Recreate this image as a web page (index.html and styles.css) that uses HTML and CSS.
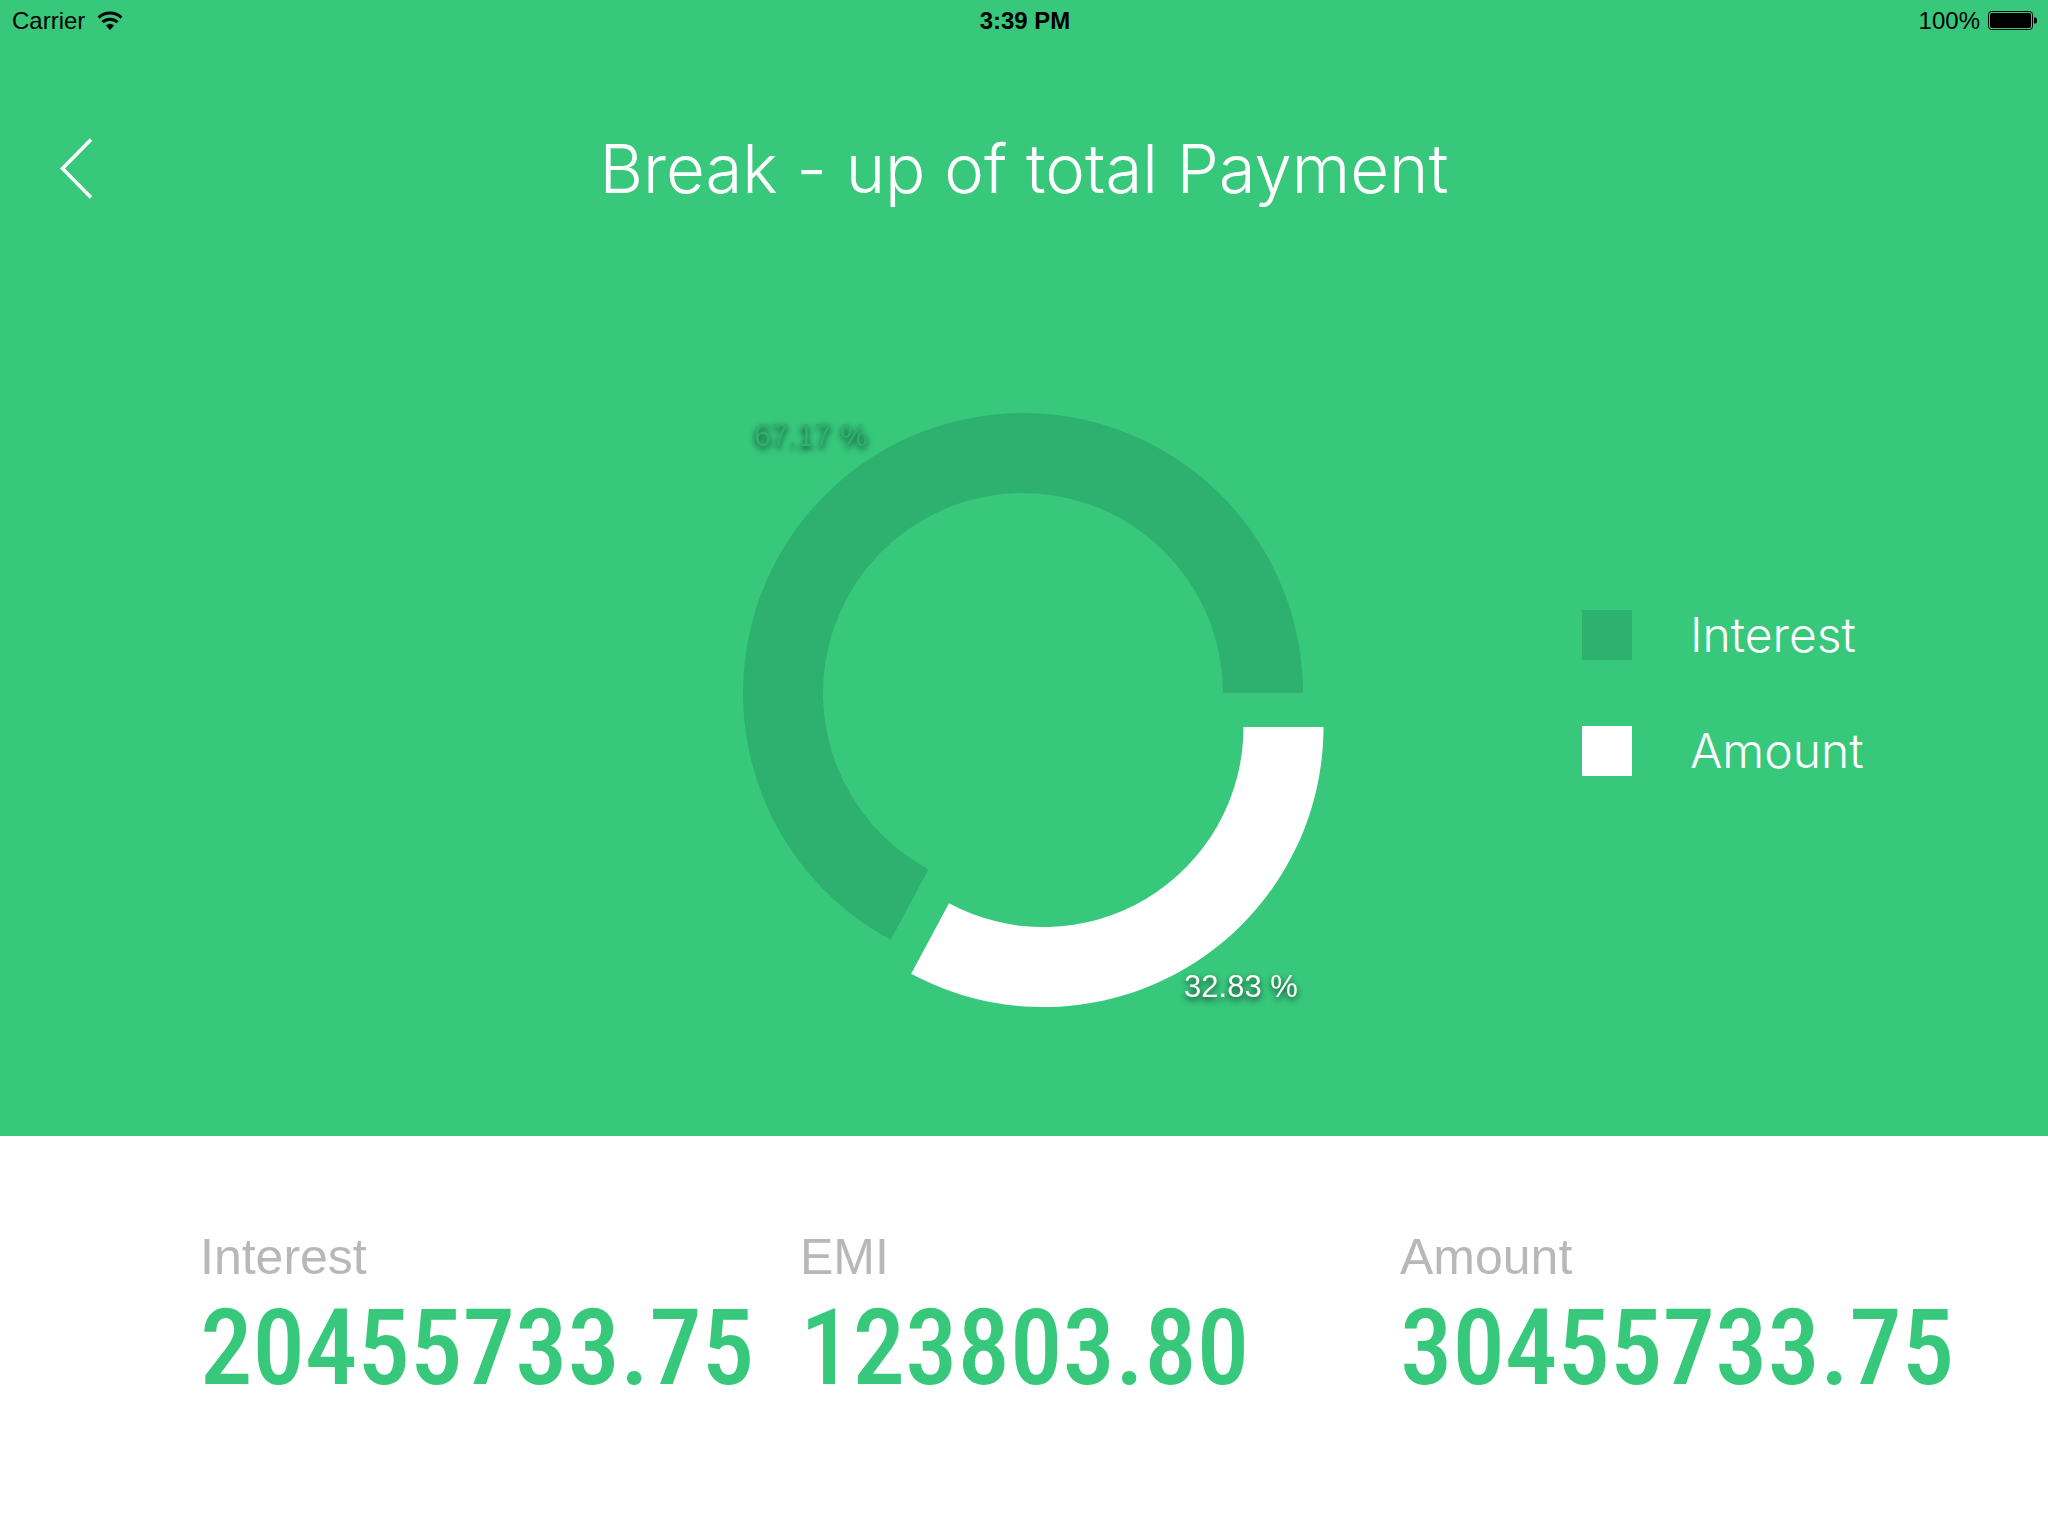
FILE: index.html
```html
<!DOCTYPE html>
<html lang="en">
<head>
<meta charset="utf-8">
<title>Break - up of total Payment</title>
<link rel="stylesheet" href="styles.css">
</head>
<body>
<main class="screen">
  <section class="overview">
    <div class="status">
      <div class="status-left">
        <span>Carrier</span>
        <svg class="wifi" viewBox="0 0 26 20" width="26" height="20" aria-label="Wi-Fi">
          <path d="M1.6 6.600a16.5 16.5 0 0 1 22.8 0" fill="none" stroke="#000" stroke-width="3"/>
          <path d="M5.5 11.100a11 11 0 0 1 15 0" fill="none" stroke="#000" stroke-width="3"/>
          <path d="M8.9 14.400a6.400 6.400 0 0 1 8.200 0L13 19z"/>
        </svg>
      </div>
      <span class="status-time">3:39 PM</span>
      <div class="status-right">
        <span>100%</span>
        <svg viewBox="0 0 50 20" width="50" height="20" aria-label="Battery full">
          <rect x="0.5" y="0.5" width="44" height="18" rx="3" fill="none" stroke="#000"/>
          <rect x="2" y="2" width="41" height="15" rx="2"/>
          <path d="M46 6.500h1a2 2 0 0 1 2 2v2a2 2 0 0 1-2 2h-1z"/>
        </svg>
      </div>
    </div>

    <header class="header">
      <button class="back" type="button" aria-label="Back">
        <svg viewBox="0 0 34 62" width="34" height="62">
          <path d="M31 1.500 2.500 30.500 31 59.500" fill="none" stroke="#fff" stroke-width="3.500"/>
        </svg>
      </button>
      <h1 class="title">Break - up of total Payment</h1>
    </header>

    <div class="chart-area">
      <svg class="chart" viewBox="704 400 640 620" width="640" height="620" role="img" aria-label="Interest 67.17 %, Amount 32.83 %">
        <path class="slice-interest" d="M1303 693A280 280 0 1 0 890.700 939.800L928.500 869.300A200 200 0 1 1 1223 693Z"/>
        <path class="slice-amount" d="M1323.500 727A280 280 0 0 1 911.200 973.800L949 903.300A200 200 0 0 0 1243.500 727Z"/>
        <text class="value-interest" x="811" y="446" text-anchor="middle">67.17 %</text>
        <text class="value-amount" x="1241" y="997" text-anchor="middle">32.83 %</text>
      </svg>
      <ul class="legend">
        <li class="legend-item"><span class="swatch swatch-interest"></span>Interest</li>
        <li class="legend-item"><span class="swatch swatch-amount"></span>Amount</li>
      </ul>
    </div>
  </section>

  <dl class="totals">
    <div class="total"><dt>Interest</dt><dd>20455733.75</dd></div>
    <div class="total"><dt>EMI</dt><dd>123803.80</dd></div>
    <div class="total"><dt>Amount</dt><dd>30455733.75</dd></div>
  </dl>
</main>
</body>
</html>
```
FILE: styles.css
```css
:root {
  --green: #37c87c;
  --green-dark: #2eb06f;
}

* { box-sizing: border-box; }

body {
  margin: 0;
  background: #fff;
  font-family: "Liberation Sans", Arial, sans-serif;
}

.screen {
  display: flex;
  flex-direction: column;
  min-height: 100vh;
}

.overview {
  flex: 1;
  background: var(--green);
  color: #fff;
}

/* Status bar */
.status {
  display: grid;
  grid-template-columns: 1fr auto 1fr;
  padding: 1px 10px 0 12px;
  font-size: 24px;
  line-height: 40px;
  color: #000;
}

.status-left,
.status-right {
  display: flex;
  align-items: center;
  gap: 12px;
}

.status-right {
  justify-content: flex-end;
  gap: 8px;
}

.status-time { font-weight: 700; }

/* Title row */
.header {
  display: grid;
  grid-template-columns: 1fr auto 1fr;
  align-items: center;
  padding: 86px 60px 0;
}

.back {
  justify-self: start;
  display: flex;
  padding: 0;
  border: 0;
  background: none;
  cursor: pointer;
}

.title {
  margin: 0;
  font-family: Inter, sans-serif;
  font-size: 67px;
  line-height: 84px;
  font-weight: 300;
}

/* Chart and legend */
.chart-area {
  display: grid;
  grid-template-columns: 1fr auto 1fr;
  align-items: center;
  padding: 189px 0 116px;
}

.chart {
  grid-column: 2;
  display: block;
  max-width: 100%;
  font-size: 31px;
}

.slice-interest { fill: var(--green-dark); }
.slice-amount { fill: #fff; }

.value-interest,
.value-amount {
  fill: #fff;
  filter: drop-shadow(0 3px 3px rgba(0, 0, 0, 0.7));
}

.value-interest { fill: var(--green-dark); }

.legend {
  display: grid;
  gap: 66px;
  margin: 0 0 34px;
  padding: 0 0 0 238px;
  list-style: none;
  font-family: Inter, sans-serif;
  font-size: 48px;
  line-height: 50px;
  font-weight: 300;
}

.legend-item {
  display: flex;
  align-items: center;
  gap: 58px;
}

.swatch {
  width: 50px;
  height: 50px;
}

.swatch-interest { background: var(--green-dark); }
.swatch-amount { background: #fff; }

/* Totals */
.totals {
  display: grid;
  grid-template-columns: repeat(3, 1fr);
  margin: 0;
  padding: 91px 48px 125px 200px;
}

.total dt {
  font-size: 50px;
  line-height: 60px;
  color: #b8b8b8;
}

.total dd {
  margin: 0;
  font-family: "Roboto Condensed", Roboto, sans-serif;
  font-size: 105px;
  line-height: 124px;
  font-weight: 500;
  color: var(--green);
}
```
